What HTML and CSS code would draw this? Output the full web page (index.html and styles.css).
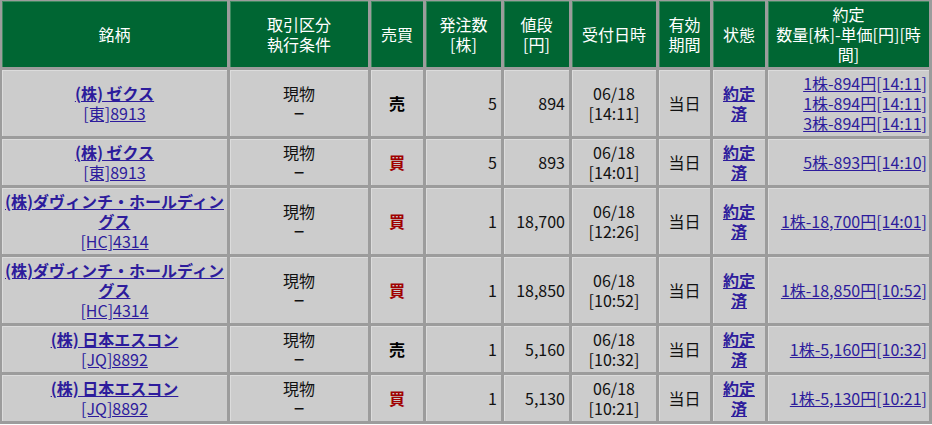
FILE: index.html
```html
<!DOCTYPE html>
<html lang="ja">
<head>
<meta charset="utf-8">
<title>注文照会</title>
<link rel="stylesheet" href="styles.css">
</head>
<body>
<table class="orders">
  <colgroup>
    <col class="c-name"><col class="c-kind"><col class="c-side"><col class="c-qty"><col class="c-price"><col class="c-date"><col class="c-term"><col class="c-state"><col class="c-exec">
  </colgroup>
  <thead>
    <tr>
      <th>銘柄</th>
      <th>取引区分<br>執行条件</th>
      <th>売買</th>
      <th>発注数<br>[株]</th>
      <th>値段<br>[円]</th>
      <th>受付日時</th>
      <th>有効<br>期間</th>
      <th>状態</th>
      <th>約定<br>数量[株]-単価[円][時間]</th>
    </tr>
  </thead>
  <tbody>
    <tr>
      <td><a href="#" class="stock"><b>(株) ゼクス</b><br>[東]8913</a></td>
      <td>現物<br><span class="dash">ー</span></td>
      <td><b class="sell">売</b></td>
      <td class="num">5</td>
      <td class="num">894</td>
      <td>06/18<br>[14:11]</td>
      <td>当日</td>
      <td><a href="#" class="done">約定<br>済</a></td>
      <td class="exec"><a href="#">1株-894円[14:11]</a><br><a href="#">1株-894円[14:11]</a><br><a href="#">3株-894円[14:11]</a></td>
    </tr>
    <tr>
      <td><a href="#" class="stock"><b>(株) ゼクス</b><br>[東]8913</a></td>
      <td>現物<br><span class="dash">ー</span></td>
      <td><b class="buy">買</b></td>
      <td class="num">5</td>
      <td class="num">893</td>
      <td>06/18<br>[14:01]</td>
      <td>当日</td>
      <td><a href="#" class="done">約定<br>済</a></td>
      <td class="exec"><a href="#">5株-893円[14:10]</a></td>
    </tr>
    <tr>
      <td><a href="#" class="stock"><b>(株)ダヴィンチ・ホールディングス</b><br>[HC]4314</a></td>
      <td>現物<br><span class="dash">ー</span></td>
      <td><b class="buy">買</b></td>
      <td class="num">1</td>
      <td class="num">18,700</td>
      <td>06/18<br>[12:26]</td>
      <td>当日</td>
      <td><a href="#" class="done">約定<br>済</a></td>
      <td class="exec"><a href="#">1株-18,700円[14:01]</a></td>
    </tr>
    <tr>
      <td><a href="#" class="stock"><b>(株)ダヴィンチ・ホールディングス</b><br>[HC]4314</a></td>
      <td>現物<br><span class="dash">ー</span></td>
      <td><b class="buy">買</b></td>
      <td class="num">1</td>
      <td class="num">18,850</td>
      <td>06/18<br>[10:52]</td>
      <td>当日</td>
      <td><a href="#" class="done">約定<br>済</a></td>
      <td class="exec"><a href="#">1株-18,850円[10:52]</a></td>
    </tr>
    <tr>
      <td><a href="#" class="stock"><b>(株) 日本エスコン</b><br>[JQ]8892</a></td>
      <td>現物<br><span class="dash">ー</span></td>
      <td><b class="sell">売</b></td>
      <td class="num">1</td>
      <td class="num">5,160</td>
      <td>06/18<br>[10:32]</td>
      <td>当日</td>
      <td><a href="#" class="done">約定<br>済</a></td>
      <td class="exec"><a href="#">1株-5,160円[10:32]</a></td>
    </tr>
    <tr>
      <td><a href="#" class="stock"><b>(株) 日本エスコン</b><br>[JQ]8892</a></td>
      <td>現物<br><span class="dash">ー</span></td>
      <td><b class="buy">買</b></td>
      <td class="num">1</td>
      <td class="num">5,130</td>
      <td>06/18<br>[10:21]</td>
      <td>当日</td>
      <td><a href="#" class="done">約定<br>済</a></td>
      <td class="exec"><a href="#">1株-5,130円[10:21]</a></td>
    </tr>
  </tbody>
</table>
</body>
</html>
```

FILE: styles.css
```css
html, body {
  margin: 0;
  padding: 0;
  background: #ffffff;
  overflow: hidden;
}

body {
  font-family: "Noto Sans CJK JP", "Noto Sans", sans-serif;
  font-size: 16px;
  line-height: 20px;
  color: #111111;
}

.orders {
  table-layout: fixed;
  width: 933px;
  margin: -2px 0 0 -1px;
  border-collapse: separate;
  border-spacing: 3px;
  background: #9c9c9c;
}

.c-name { width: 225px; }
.c-kind { width: 138px; }
.c-side { width: 52px; }
.c-qty { width: 75px; }
.c-price { width: 65px; }
.c-date { width: 84px; }
.c-term { width: 51px; }
.c-state { width: 52px; }
.c-exec { width: 161px; }

.orders th,
.orders td {
  box-sizing: border-box;
  padding: 3px 2px 3px;
  text-align: center;
  vertical-align: middle;
}

.orders th {
  background: #006633;
  color: #ffffff;
  font-weight: normal;
  box-shadow: inset 1px 1px 0 #3d8a5f;
}

.orders td {
  background: #cccccc;
  box-shadow: inset 1px 1px 0 #dcdcdc;
}

.orders td.num {
  text-align: right;
  padding-right: 4px;
}

.orders td.exec {
  text-align: right;
  padding-right: 2px;
}

.orders a {
  color: #2d1c9c;
  text-decoration: underline;
}

.stock b,
.done {
  font-weight: bold;
}

.dash {
  display: inline-block;
  transform: scaleX(0.7);
}

.sell {
  color: #000000;
}

.buy {
  color: #a00000;
}
```
